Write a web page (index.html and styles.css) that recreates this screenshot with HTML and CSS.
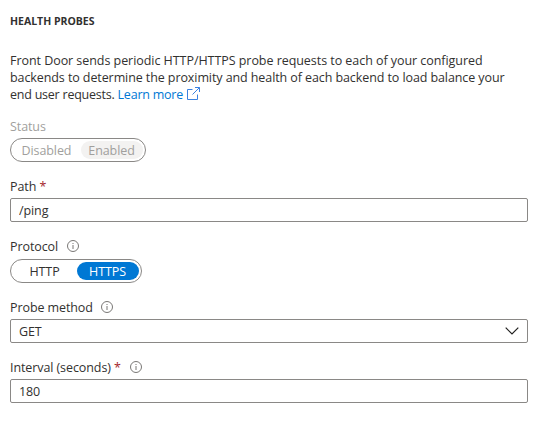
FILE: index.html
```html
<!DOCTYPE html>
<html lang="en">
<head>
    <meta charset="UTF-8">
    <meta name="viewport" content="width=device-width, initial-scale=1.0">
    <title>Health probes</title>
    <link rel="stylesheet" href="styles.css">
</head>
<body>
    <div class="panel">
        <h2 class="title">HEALTH PROBES</h2>

        <p class="description">
            <span class="loose">Front Door sends periodic HTTP/HTTPS probe requests to each of your configured</span><br>
            backends to determine the proximity and health of each backend to load balance your<br>
            <span class="tight">end user requests. <a class="link" href="#">Learn more<svg class="external" viewBox="0 0 13 13"><path d="M5.5 2.5h-5v10h10v-5M8 .5h4.500v4.500M12.500 .5L5.500 7.500"/></svg></a></span>
        </p>

        <!-- Status -->
        <div class="field status">
            <div class="label disabled">Status</div>
            <div class="toggle disabled">
                <span class="option">Disabled</span>
                <span class="option selected">Enabled</span>
            </div>
        </div>

        <!-- Path -->
        <div class="field path">
            <label class="label" for="path"><span>Path <span class="required">*</span></span></label>
            <input class="input" id="path" type="text" value="/ping">
        </div>

        <!-- Protocol -->
        <div class="field protocol">
            <div class="label"><span>Protocol</span>
                <svg class="info" viewBox="0 0 12 12"><circle cx="6" cy="6" r="5.500"/><path d="M6 5v4M6 3v1"/></svg>
            </div>
            <div class="toggle">
                <span class="option">HTTP</span>
                <span class="option selected">HTTPS</span>
            </div>
        </div>

        <!-- Probe method -->
        <div class="field method">
            <div class="label"><span>Probe method</span>
                <svg class="info" viewBox="0 0 12 12"><circle cx="6" cy="6" r="5.500"/><path d="M6 5v4M6 3v1"/></svg>
            </div>
            <div class="input select">
                <span>GET</span>
                <svg class="chevron" viewBox="0 0 14 8"><path d="M.7 .7L7 7L13.300 .7"/></svg>
            </div>
        </div>

        <!-- Interval -->
        <div class="field interval">
            <label class="label" for="interval"><span>Interval (seconds) <span class="required">*</span></span>
                <svg class="info" viewBox="0 0 12 12"><circle cx="6" cy="6" r="5.500"/><path d="M6 5v4M6 3v1"/></svg>
            </label>
            <input class="input" id="interval" type="text" value="180">
        </div>
    </div>
</body>
</html>
```
FILE: styles.css
```css
* {
    box-sizing: border-box;
}

body {
    margin: 0;
    background: #fff;
    color: #323130;
    font-family: "Open Sans", "Noto Sans", sans-serif;
    font-size: 12.5px;
    line-height: 17px;
    letter-spacing: -0.09px;
}

.panel {
    width: 541px;
    padding: 13px 13px 0 10px;
}

.title {
    margin: 0 0 22px;
    font-size: 10.5px;
    font-weight: 700;
    line-height: 17px;
    letter-spacing: 0;
}

.description {
    margin: 0 0 15px;
    white-space: nowrap;
}

.loose {
    letter-spacing: -0.05px;
}

.tight {
    letter-spacing: -0.23px;
}

.link {
    color: #0078d4;
    text-decoration: none;
}

.external {
    width: 13px;
    height: 13px;
    margin-left: 4px;
    vertical-align: -1px;
    fill: none;
    stroke: #3b82e0;
}

/* Fields */
.field {
    height: 60px;
}

.protocol {
    height: 61px;
}

.protocol .label {
    gap: 9px;
    height: 21px;
}

.label {
    display: flex;
    gap: 8px;
    height: 20px;
    line-height: 18px;
    white-space: nowrap;
}

.label.disabled {
    color: #a19f9d;
}

.required {
    color: #a4262c;
}

.info {
    width: 12px;
    height: 12px;
    margin-top: 2px;
    fill: none;
    stroke: #797775;
}

.interval .label {
    gap: 9px;
}

.input {
    display: block;
    width: 518px;
    height: 24px;
    padding: 0 8px;
    border: 1px solid #8a8886;
    border-radius: 2px;
    background: #fff;
    color: #323130;
    font: inherit;
    letter-spacing: inherit;
    outline: none;
}

.select {
    display: flex;
    align-items: center;
    justify-content: space-between;
}

.chevron {
    width: 14px;
    height: 8px;
    fill: none;
    stroke: #201f1e;
    stroke-width: 1.2;
}

/* Toggle buttons */
.toggle {
    display: flex;
    width: 132px;
    height: 24px;
    padding: 2px;
    border: 1px solid #8a8886;
    border-radius: 12px;
    line-height: 19px;
    text-align: center;
}

.option {
    width: 64px;
    height: 18px;
    padding-right: 1px;
    border-radius: 9px;
}

.option.selected {
    width: 62px;
    background: #0078d4;
    color: #fff;
}

.toggle.disabled {
    width: 136px;
    color: #a19f9d;
}

.disabled .option {
    width: 68px;
}

.disabled .option.selected {
    width: 62px;
    background: #f3f2f1;
    color: #a19f9d;
}
```
